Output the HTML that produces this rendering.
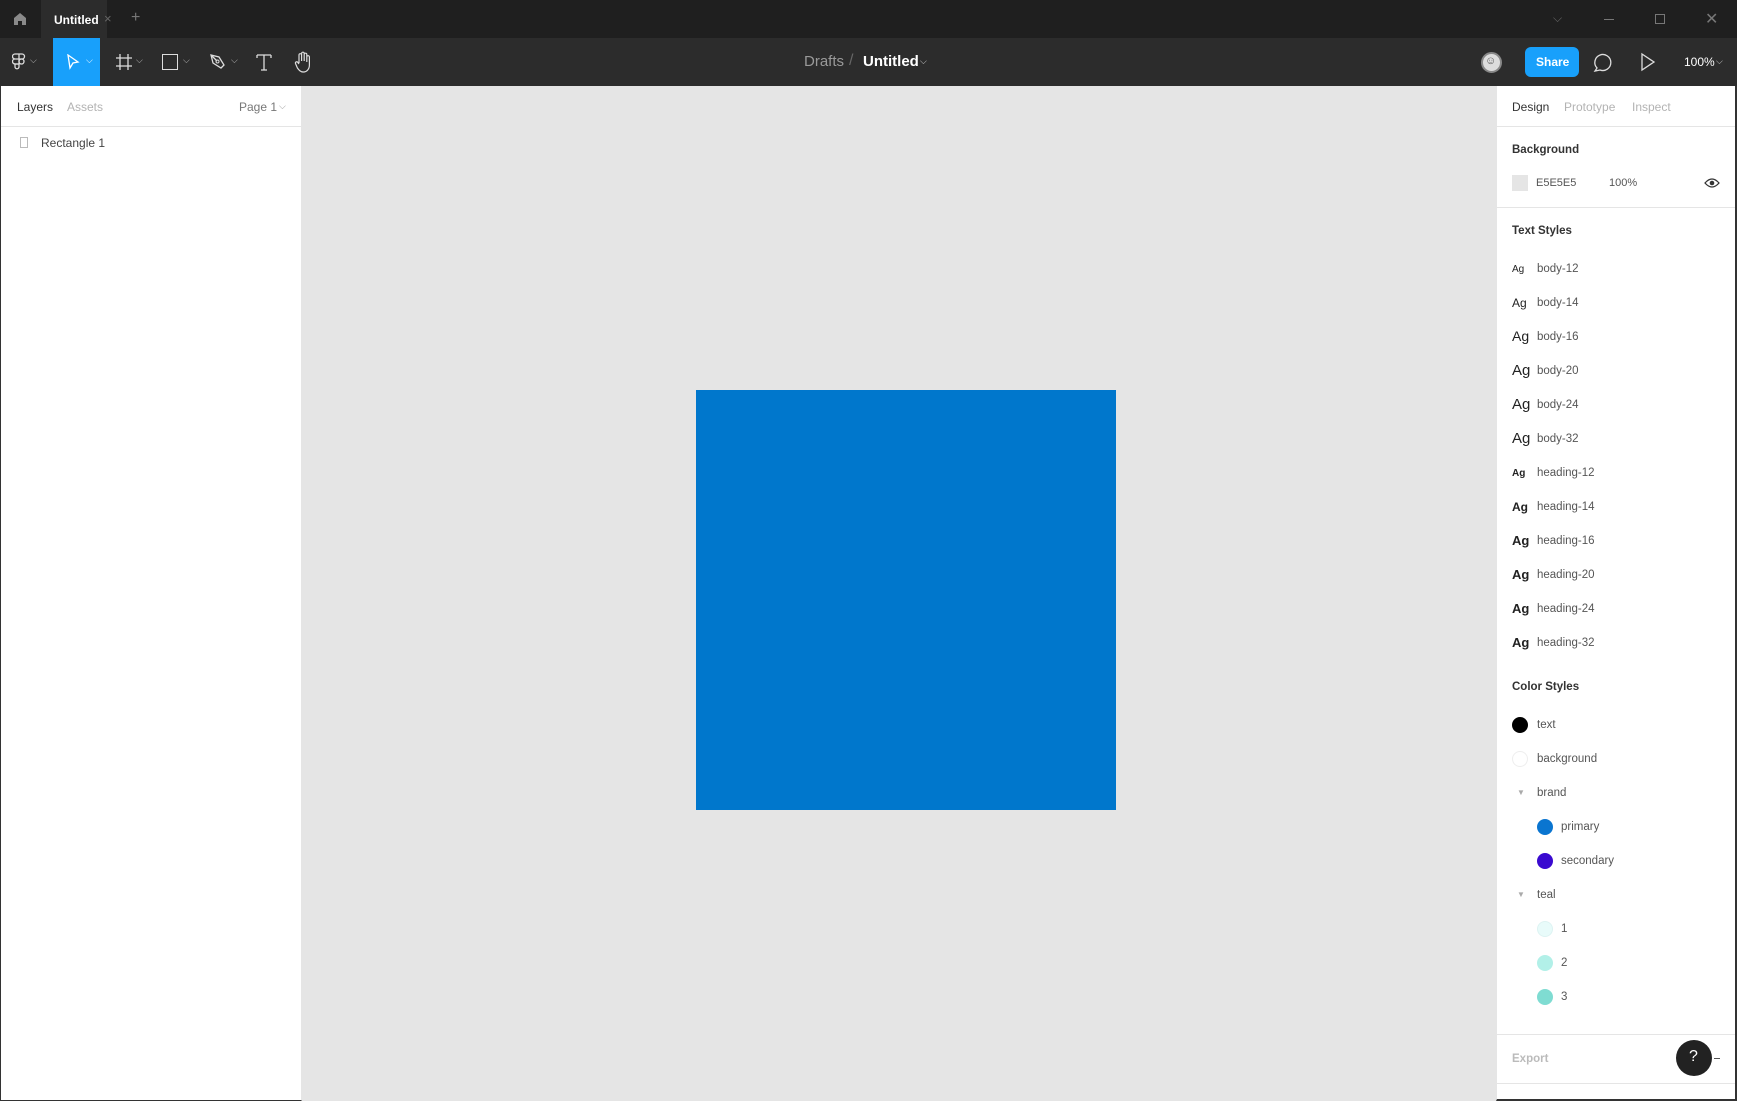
<!DOCTYPE html>
<html><head><meta charset="utf-8"><style>
*{margin:0;padding:0;box-sizing:border-box}
body{width:1737px;height:1101px;overflow:hidden;background:#e5e5e5;font-family:"Liberation Sans",sans-serif;position:relative}
.abs{position:absolute}
.tabbar{left:0;top:0;width:1737px;height:38px;background:#1f1f1f}
.toolbar{left:0;top:38px;width:1737px;height:48px;background:#2c2c2c}
.lp{left:0;top:86px;width:302px;height:1015px;background:#fff;border-left:1px solid #333;border-right:1px solid #e5e5e5;border-bottom:1px solid #333}
.rp{left:1496px;top:86px;width:241px;height:1015px;background:#fff;border-right:2px solid #333;border-bottom:2px solid #333;border-left:1px solid #e5e5e5}
.t{position:absolute;font-size:11px;color:#333;white-space:nowrap}
.g{color:#b3b3b3}
.hd{font-weight:bold;font-size:11.5px;color:#333}
.ag{position:absolute;left:16px;color:#222;white-space:nowrap}
.lbl{position:absolute;left:41px;font-size:11.5px;color:#555;white-space:nowrap}
.dot{position:absolute;width:16px;height:16px;border-radius:50%}
svg{position:absolute}
</style></head><body>
<div class="abs tabbar"></div>
<svg style="left:13px;top:12px" width="14" height="14" viewBox="0 0 14 14"><path d="M1 6 L7 1 L13 6 V13 H9 V9 H5 V13 H1Z" fill="#8a8a8a"/></svg>
<div class="abs" style="left:41px;top:0;width:66px;height:38px;background:#2c2c2c"></div>
<div class="t" style="left:54px;top:13px;color:#fff;font-size:12px;font-weight:bold">Untitled</div>
<div class="t" style="left:104px;top:11px;color:#666;font-size:13px">×</div>
<div class="t" style="left:131px;top:9px;color:#777;font-size:16px">+</div>
<div class="t" style="left:1553px;top:11px;color:#666;font-size:12px">⌵</div>
<div class="abs" style="left:1604px;top:19px;width:10px;height:1px;background:#777"></div>
<div class="abs" style="left:1655px;top:14px;width:10px;height:10px;border:1px solid #777"></div>
<div class="t" style="left:1705px;top:9px;color:#777;font-size:16px">✕</div>

<div class="abs toolbar"></div>
<svg style="left:12px;top:53px" width="14" height="18" viewBox="0 0 14 18"><g fill="none" stroke="#ddd" stroke-width="1.3"><path d="M3 1h4v5H3a2.5 2.5 0 0 1 0-5zM7 1h3a2.5 2.5 0 0 1 0 5H7zM3 6h4v5H3a2.5 2.5 0 0 1 0-5z"/><circle cx="9.5" cy="8.5" r="2.5"/><path d="M3 11h4v3a2 2 0 1 1-4-0.5z"/></g></svg>
<div class="t" style="left:30px;top:55px;color:#bbb;font-size:9px">⌵</div>
<div class="abs" style="left:53px;top:38px;width:47px;height:48px;background:#18a0fb"></div>
<svg style="left:66px;top:54px" width="14" height="16" viewBox="0 0 14 16"><path d="M2 1 L12 8 L7 9 L4 14Z" fill="none" stroke="#fff" stroke-width="1.3"/></svg>
<div class="t" style="left:86px;top:55px;color:#fff;font-size:9px">⌵</div>
<svg style="left:115px;top:53px" width="18" height="18" viewBox="0 0 18 18"><path d="M5 1V17M13 1V17M1 5H17M1 13H17" stroke="#ddd" stroke-width="1.3"/></svg>
<div class="t" style="left:136px;top:55px;color:#bbb;font-size:9px">⌵</div>
<div class="abs" style="left:162px;top:54px;width:16px;height:16px;border:1.3px solid #ddd"></div>
<div class="t" style="left:183px;top:55px;color:#bbb;font-size:9px">⌵</div>
<svg style="left:209px;top:53px" width="18" height="18" viewBox="0 0 18 18"><path d="M2 2 L10 4 L15 12 L12 15 L4 10Z M2 2 L8 8" fill="none" stroke="#ddd" stroke-width="1.3"/><circle cx="8.5" cy="8.5" r="1.5" fill="none" stroke="#ddd"/></svg>
<div class="t" style="left:231px;top:55px;color:#bbb;font-size:9px">⌵</div>
<svg style="left:256px;top:53px" width="16" height="18" viewBox="0 0 16 18"><path d="M1 2H15M8 2V17M5 17H11M1 2V5M15 2V5" stroke="#ddd" stroke-width="1.3" fill="none"/></svg>
<svg style="left:294px;top:51px" width="18" height="22" viewBox="0 0 18 22"><path d="M5 12V4a1.3 1.3 0 0 1 2.6 0V10V2.5a1.3 1.3 0 0 1 2.6 0V10V3.5a1.3 1.3 0 0 1 2.6 0V11V6a1.3 1.3 0 0 1 2.6 0V14c0 4-2.5 7-6 7-3 0-4.5-2-6-4L1.5 12.5a1.3 1.3 0 0 1 2-1.5L5 13" fill="none" stroke="#ddd" stroke-width="1.2"/></svg>
<div class="t" style="left:804px;top:53px;color:#999;font-size:15px">Drafts</div>
<div class="t" style="left:849px;top:52px;color:#666;font-size:16px">/</div>
<div class="t" style="left:863px;top:53px;color:#fff;font-size:15px;font-weight:bold">Untitled</div>
<div class="t" style="left:920px;top:56px;color:#ccc;font-size:9px">⌵</div>
<div class="abs" style="left:1481px;top:52px;width:21px;height:21px;border-radius:50%;background:#ddd;border:2px solid #888"></div>
<div class="t" style="left:1485px;top:55px;color:#555;font-size:11px">☺</div>
<div class="abs" style="left:1525px;top:47px;width:54px;height:30px;border-radius:6px;background:#18a0fb"></div>
<div class="t" style="left:1536px;top:55px;color:#fff;font-size:12px;font-weight:bold">Share</div>
<svg style="left:1593px;top:51px" width="20" height="22" viewBox="0 0 20 22"><path d="M4 17 A8 8 0 1 1 7 19 L2 20 Z" fill="none" stroke="#ddd" stroke-width="1.3"/></svg>
<svg style="left:1640px;top:52px" width="16" height="20" viewBox="0 0 16 20"><path d="M2 2 L14 10 L2 18Z" fill="none" stroke="#ddd" stroke-width="1.3"/></svg>
<div class="t" style="left:1684px;top:55px;color:#fff;font-size:12px">100%</div>
<div class="t" style="left:1716px;top:56px;color:#ccc;font-size:9px">⌵</div>

<div class="abs lp"></div>
<div class="t" style="left:17px;top:100px;font-size:12px">Layers</div>
<div class="t g" style="left:67px;top:100px;font-size:12px">Assets</div>
<div class="t" style="left:239px;top:100px;font-size:12px;color:#777">Page 1</div>
<div class="t" style="left:279px;top:101px;font-size:9px;color:#999">⌵</div>
<div class="abs" style="left:1px;top:126px;width:300px;height:1px;background:#e5e5e5"></div>
<div class="abs" style="left:20px;top:137px;width:8px;height:11px;border:1px solid #bbb"></div>
<div class="t" style="left:41px;top:136px;font-size:12px;color:#444">Rectangle 1</div>

<div class="abs" style="left:696px;top:390px;width:420px;height:420px;background:#0077cc"></div>

<div class="abs rp"></div>
<div class="t" style="left:1512px;top:100px;font-size:12px">Design</div>
<div class="t g" style="left:1564px;top:100px;font-size:12px">Prototype</div>
<div class="t g" style="left:1632px;top:100px;font-size:12px">Inspect</div>
<div class="abs" style="left:1497px;top:126px;width:238px;height:1px;background:#e5e5e5"></div>
<div class="t hd" style="left:1512px;top:144px">Background</div>
<div class="abs" style="left:1512px;top:175px;width:16px;height:16px;background:#e5e5e5"></div>
<div class="t" style="left:1536px;top:177px;color:#555">E5E5E5</div>
<div class="t" style="left:1609px;top:177px;color:#555">100%</div>
<svg style="left:1704px;top:177px" width="16" height="12" viewBox="0 0 16 12"><path d="M1 6 Q8 -2 15 6 Q8 14 1 6Z" fill="none" stroke="#333" stroke-width="1.3"/><circle cx="8" cy="6" r="2.3" fill="#333"/></svg>
<div class="abs" style="left:1497px;top:207px;width:238px;height:1px;background:#e5e5e5"></div>
<div class="t hd" style="left:1512px;top:225px">Text Styles</div>

<div style="position:absolute;left:1496px;top:0;width:241px;height:1101px">
<div class="ag" style="top:264px;font-size:10px">Ag</div><div class="lbl" style="top:263px">body-12</div>
<div class="ag" style="top:296px;font-size:12px">Ag</div><div class="lbl" style="top:297px">body-14</div>
<div class="ag" style="top:328px;font-size:14px">Ag</div><div class="lbl" style="top:331px">body-16</div>
<div class="ag" style="top:362px;font-size:15px">Ag</div><div class="lbl" style="top:365px">body-20</div>
<div class="ag" style="top:396px;font-size:15px">Ag</div><div class="lbl" style="top:399px">body-24</div>
<div class="ag" style="top:430px;font-size:15px">Ag</div><div class="lbl" style="top:433px">body-32</div>
<div class="ag" style="top:468px;font-size:10px;font-weight:bold">Ag</div><div class="lbl" style="top:467px">heading-12</div>
<div class="ag" style="top:500px;font-size:12px;font-weight:bold">Ag</div><div class="lbl" style="top:501px">heading-14</div>
<div class="ag" style="top:533px;font-size:13px;font-weight:bold">Ag</div><div class="lbl" style="top:535px">heading-16</div>
<div class="ag" style="top:567px;font-size:13px;font-weight:bold">Ag</div><div class="lbl" style="top:569px">heading-20</div>
<div class="ag" style="top:601px;font-size:13px;font-weight:bold">Ag</div><div class="lbl" style="top:603px">heading-24</div>
<div class="ag" style="top:635px;font-size:13px;font-weight:bold">Ag</div><div class="lbl" style="top:637px">heading-32</div>

<div class="t hd" style="left:16px;top:681px">Color Styles</div>
<div class="dot" style="left:16px;top:717px;background:#000"></div><div class="lbl" style="top:719px">text</div>
<div class="dot" style="left:16px;top:751px;border:1px solid #eee"></div><div class="lbl" style="top:753px">background</div>
<div class="t" style="left:21px;top:788px;font-size:8px;color:#aaa">▼</div><div class="lbl" style="top:787px">brand</div>
<div class="dot" style="left:41px;top:819px;background:#0a75d0"></div><div class="lbl" style="left:65px;top:821px">primary</div>
<div class="dot" style="left:41px;top:853px;background:#3a0ad0"></div><div class="lbl" style="left:65px;top:855px">secondary</div>
<div class="t" style="left:21px;top:890px;font-size:8px;color:#aaa">▼</div><div class="lbl" style="top:889px">teal</div>
<div class="dot" style="left:41px;top:921px;background:#e8fbfa;border:1px solid #ddf3f2"></div><div class="lbl" style="left:65px;top:923px">1</div>
<div class="dot" style="left:41px;top:955px;background:#b2f0e8"></div><div class="lbl" style="left:65px;top:957px">2</div>
<div class="dot" style="left:41px;top:989px;background:#7fdcd2"></div><div class="lbl" style="left:65px;top:991px">3</div>
<div class="abs" style="left:1px;top:1034px;width:238px;height:1px;background:#e5e5e5"></div>
<div class="t" style="left:16px;top:1053px;font-weight:bold;color:#bbb;font-size:11.5px">Export</div>
<div class="abs" style="left:1px;top:1083px;width:238px;height:1px;background:#e5e5e5"></div>
<div class="abs" style="left:218px;top:1058px;width:6px;height:1px;background:#555"></div>
<div class="abs" style="left:180px;top:1040px;width:36px;height:36px;border-radius:50%;background:#222"></div>
<div class="t" style="left:193px;top:1048px;color:#fff;font-size:16px">?</div>
</div>
</body></html>
